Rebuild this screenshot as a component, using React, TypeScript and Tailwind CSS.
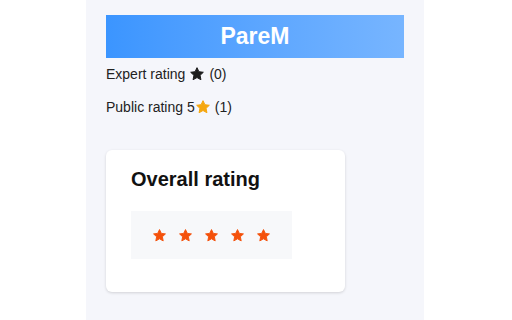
import React from 'react'

function Star({ className }: { className: string }) {
  return (
    <svg viewBox="0 0 24 24" className={className} aria-hidden>
      <path
        d="M12 2.5l2.9 6.1 6.6.8-4.9 4.6 1.3 6.6L12 17.3l-5.9 3.3 1.3-6.6-4.9-4.6 6.6-.8z"
        fill="currentColor"
        strokeLinejoin="round"
        stroke="currentColor"
        strokeWidth="1.5"
      />
    </svg>
  )
}

export default function App() {
  return (
    <div className="h-[320px] w-[512px] bg-white font-['Liberation_Sans',Arial,sans-serif]">
      <div className="ml-[86px] h-full w-[338px] bg-[#f5f6fb] px-5 pt-[15px]">
        <div className="flex h-[43px] items-center justify-center bg-gradient-to-r from-[#3b95ff] to-[#77b5ff] text-[23px] font-bold text-white">
          PareM
        </div>
        <div className="mt-[7px] flex h-[18px] items-center text-[14px] text-[#222]">
          Expert rating
          <Star className="mx-1 h-[16px] w-[16px] text-[#1c1c1c]" />
          (0)
        </div>
        <div className="mt-[15px] flex h-[18px] items-center text-[14px] text-[#222]">
          Public rating 5
          <Star className="mr-1 h-[16px] w-[16px] text-[#f5a70f]" />
          (1)
        </div>
        <div className="mt-[34px] h-[142px] w-[239px] rounded-md bg-white px-[25px] pt-[17px] shadow-[0_1px_3px_rgba(0,0,0,0.15)]">
          <div className="h-[24px] text-[20px] leading-[24px] font-bold text-[#111]">Overall rating</div>
          <div className="mt-[20px] flex h-[48px] w-[161px] items-center gap-[11px] bg-[#f7f8fa] pl-[21px]">
            {[0, 1, 2, 3, 4].map((i) => (
              <Star key={i} className="h-[15px] w-[15px] text-[#f4510b]" />
            ))}
          </div>
        </div>
      </div>
    </div>
  )
}
